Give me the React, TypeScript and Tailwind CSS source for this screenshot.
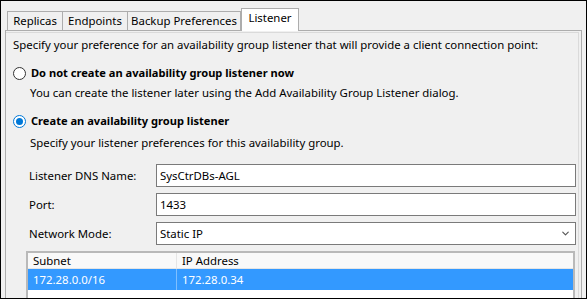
import { ChevronDown } from 'lucide-react';

const font = { fontFamily: '"Noto Sans", "Liberation Sans", sans-serif' };

function Tab({ label, active, w }: { label: string; active?: boolean; w: string }) {
  if (active) {
    return (
      <div className={'relative -mb-px flex h-[23px] items-start justify-center border border-b-0 border-[#adadad] bg-white pt-[1px] ' + w}>
        {label}
      </div>
    );
  }
  return (
    <div className={'flex h-[19px] items-start justify-center border border-b-0 border-l-0 first:border-l border-[#adadad] bg-[#f0f0f0] pt-[1px] ' + w}>
      {label}
    </div>
  );
}

function Radio({ checked }: { checked?: boolean }) {
  return (
    <span
      className={
        'flex h-[13px] w-[13px] shrink-0 items-center justify-center rounded-full border bg-white ' +
        (checked ? 'border-[#0078d7]' : 'border-[#333333]')
      }
    >
      {checked && <span className="h-[7px] w-[7px] rounded-full bg-[#0078d7]" />}
    </span>
  );
}

function Field({ label, value, select }: { label: string; value: string; select?: boolean }) {
  return (
    <div className="flex items-center">
      <div className="w-[143px] shrink-0 whitespace-nowrap pl-[16px]">{label}</div>
      <div className="flex h-[23px] w-[420px] shrink-0 items-center justify-between border border-[#7a7a7a] bg-white pl-[3px] pr-[4px]">
        <span>{value}</span>
        {select && <ChevronDown size={11} strokeWidth={2.5} className="text-[#555]" />}
      </div>
    </div>
  );
}

export default function App() {
  return (
    <div
      className="h-[299px] w-[587px] overflow-hidden border border-black bg-[#f0f0f0] text-[11.4px] leading-[16px] text-black"
      style={font}
    >
      <div className="ml-[6px] mt-[7px] flex items-end">
        <Tab label="Replicas" w="w-[56px]" />
        <Tab label="Endpoints" w="w-[65px]" />
        <Tab label="Backup Preferences" w="w-[113px]" />
        <Tab label="Listener" active w="w-[58px]" />
      </div>
      <div className="ml-[4px] h-[280px] w-[577px] border border-[#adadad] bg-[#f0f0f0]">
        <div className="mt-[1px] h-full w-[573px] border-r border-t border-[#dadada] pl-[7px]">
          <div className="flex h-[23px] items-center">
            Specify your preference for an availability group listener that will provide a client connection point:
          </div>

          <div className="mt-[7px] flex h-[20px] items-center gap-[5px]">
            <Radio />
            <span className="text-[11.1px] font-bold">Do not create an availability group listener now</span>
          </div>
          <div className="flex h-[20px] items-center pl-[17px]">
            You can create the listener later using the Add Availability Group Listener dialog.
          </div>

          <div className="mt-[8px] flex h-[20px] items-center gap-[5px]">
            <Radio checked />
            <span className="text-[11.1px] font-bold">Create an availability group listener</span>
          </div>
          <div className="mt-[2px] flex h-[20px] items-center pl-[17px]">
            Specify your listener preferences for this availability group.
          </div>

          <div className="mt-[11px] flex flex-col gap-[6px]">
            <Field label="Listener DNS Name:" value="SysCtrDBs-AGL" />
            <Field label="Port:" value="1433" />
            <Field label="Network Mode:" value="Static IP" select />
          </div>

          <div className="ml-[13px] mt-[6px] h-[60px] w-[549px] border-2 border-[#b9b9b9] bg-white">
            <div className="flex h-[16px] items-center border-b border-[#e5e5e5] bg-[#f9f9f9]">
              <div className="w-[149px] border-r border-[#e5e5e5] pl-[5px]">Subnet</div>
              <div className="pl-[5px]">IP Address</div>
            </div>
            <div className="flex h-[21px] items-center bg-[#3399ff] text-white">
              <div className="flex h-full w-[149px] items-center border-r border-[#7fbfff] pl-[5px]">172.28.0.0/16</div>
              <div className="pl-[5px]">172.28.0.34</div>
            </div>
          </div>
        </div>
      </div>
    </div>
  );
}
